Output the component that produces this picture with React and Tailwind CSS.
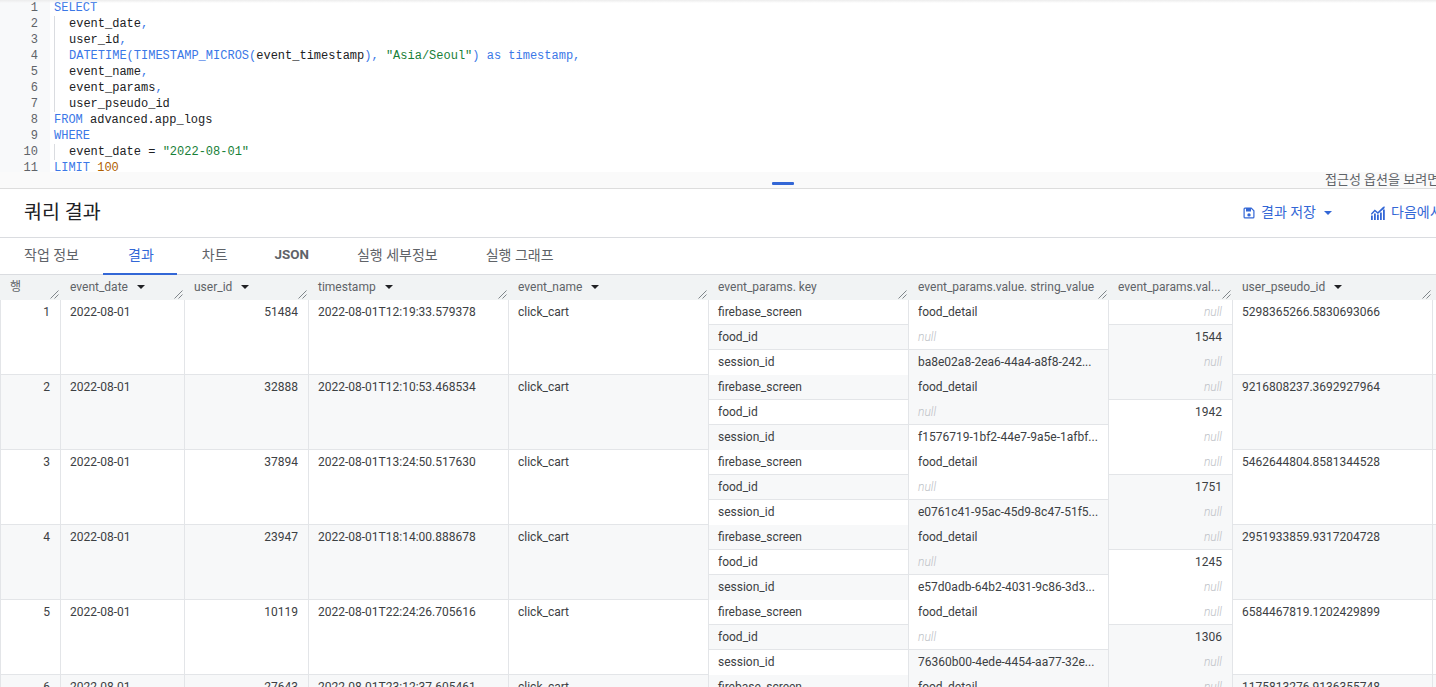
const Kw = ({ children }) => <span className="text-[#3b78e7]">{children}</span>;
const Str = ({ children }) => <span className="text-[#188038]">{children}</span>;
const Num = ({ children }) => <span className="text-[#b06000]">{children}</span>;

const sql = [
  [<Kw>SELECT</Kw>, false],
  [<>event_date<Kw>,</Kw></>, true],
  [<>user_id<Kw>,</Kw></>, true],
  [<><Kw>DATETIME(TIMESTAMP_MICROS(</Kw>event_timestamp<Kw>), </Kw><Str>"Asia/Seoul"</Str><Kw>) as timestamp,</Kw></>, true],
  [<>event_name<Kw>,</Kw></>, true],
  [<>event_params<Kw>,</Kw></>, true],
  [<>user_pseudo_id</>, true],
  [<><Kw>FROM</Kw> advanced.app_logs</>, false],
  [<Kw>WHERE</Kw>, false],
  [<>event_date = <Str>"2022-08-01"</Str></>, true],
  [<><Kw>LIMIT</Kw> <Num>100</Num></>, false],
];

const rows = [
  ["1", "51484", "2022-08-01T12:19:33.579378", "ba8e02a8-2ea6-44a4-a8f8-242...", "1544", "5298365266.5830693066"],
  ["2", "32888", "2022-08-01T12:10:53.468534", "f1576719-1bf2-44e7-9a5e-1afbf...", "1942", "9216808237.3692927964"],
  ["3", "37894", "2022-08-01T13:24:50.517630", "e0761c41-95ac-45d9-8c47-51f5...", "1751", "5462644804.8581344528"],
  ["4", "23947", "2022-08-01T18:14:00.888678", "e57d0adb-64b2-4031-9c86-3d3...", "1245", "2951933859.9317204728"],
  ["5", "10119", "2022-08-01T22:24:26.705616", "76360b00-4ede-4454-aa77-32e...", "1306", "6584467819.1202429899"],
  ["6", "27643", "2022-08-01T23:12:37.605461", "", "", "1175813276.9136355748"],
];

const colGrid = "grid grid-cols-[60px_124px_124px_200px_200px_200px_200px_124px_200px_4px]";

function Grip() {
  return (
    <svg className="absolute right-[1px] bottom-[1px]" width="9" height="9" viewBox="0 0 9 9" fill="none" stroke="#80868b" strokeWidth="1">
      <path d="M0.5 8.5 L8.5 0.5" />
      <path d="M4.5 8.5 L8.5 4.5" />
    </svg>
  );
}

function Caret() {
  return (
    <svg className="ml-[9px] shrink-0" width="8" height="4" viewBox="0 0 8 4">
      <path d="M0 0 H8 L4 4 Z" fill="#202124" />
    </svg>
  );
}

function Head({ label, caret }) {
  return (
    <div className="relative flex h-[25px] items-center pl-[10px] pb-[1px] text-[#5f6368] overflow-hidden whitespace-nowrap">
      <span>{label}</span>
      {caret && <Caret />}
      <Grip />
    </div>
  );
}

function Cell({ children, right }) {
  return (
    <div className={`h-full border-l border-[#e3e5e8] pl-[9px] pr-[10px] pt-[4px] leading-[16px] ${right ? "text-right" : ""}`}>
      {children}
    </div>
  );
}

const Null = () => <span className="italic font-light text-[#bdc1c6]">null</span>;

function Sub({ children, bg, divider, right }) {
  return (
    <div
      className={`h-[25px] pl-[9px] pr-[10px] leading-[24px] whitespace-nowrap overflow-hidden ${bg} ${divider ? "border-b border-[#e3e5e8]" : ""} ${right ? "text-right" : ""}`}
    >
      {children}
    </div>
  );
}

const tabs = [
  ["작업 정보", "px-[24px]"],
  ["결과", "pl-[25px] pr-[23px] text-[#3367d6] border-b-2 border-[#3367d6] -mb-[1px] pt-[1px]"],
  ["차트", "pl-[25px] pr-[23px]"],
  ["JSON", "px-[24px] font-bold text-[13.4px]"],
  ["실행 세부정보", "px-[24px]"],
  ["실행 그래프", "px-[24px]"],
];

export default function App() {
  return (
    <div className="h-[687px] w-[1436px] overflow-hidden bg-white font-['Roboto','Noto_Sans_CJK_KR',sans-serif] text-[12px] text-[#3c4043] flex flex-col">
      {/* editor */}
      <div className="relative h-[176px] shrink-0 flex overflow-hidden">
        <div className="w-[50px] bg-[#f8f9fa] shrink-0">
          {sql.map((_, i) => (
            <div key={i} className="h-[16px] pr-[12px] text-right font-['Liberation_Mono',monospace] leading-[16px] text-[#5f6368]">
              {i + 1}
            </div>
          ))}
        </div>
        <div className="pl-[4px] font-['Liberation_Mono',monospace] text-[#202124]">
          {sql.map(([c, indent], i) => (
            <div key={i} className={`h-[16px] leading-[16px] whitespace-pre ${indent ? "pl-[14px] border-l border-[#dadce0]" : ""}`}>
              {c}
            </div>
          ))}
        </div>
        <div className="absolute inset-x-0 top-0 h-[3px] bg-gradient-to-b from-[#ececec] to-transparent" />
        {/* splitter band lies over the clipped last code line */}
        <div className="absolute inset-x-0 top-[172px] h-[4px] bg-[#fafafa]" />
      </div>

      {/* splitter */}
      <div className="relative h-[13px] shrink-0 bg-[#fafafa] border-b border-[#dddddd]">
        <div className="absolute left-[772px] top-[6px] h-[3px] w-[22px] rounded-[1px] bg-[#3367d6]" />
        <div className="absolute left-[1325px] -top-[4px] whitespace-nowrap text-[13px] leading-[15px] text-[#5f6368]">접근성 옵션을 보려면</div>
      </div>

      {/* title */}
      <div className="h-[49px] shrink-0 flex items-center border-b border-[#dadce0] pl-[24px]">
        <div className="text-[19.5px] text-[#202124] w-[1219px] shrink-0 pb-[1px]">쿼리 결과</div>
        <div className="flex items-center shrink-0 text-[#3367d6] pb-[1px]">
          <svg width="12" height="12" viewBox="0 0 12 12">
            <path fillRule="evenodd" fill="#3367d6" d="M2 0.5h6.5L11.5 3.5V10a1.5 1.5 0 0 1-1.5 1.5H2A1.5 1.5 0 0 1 .5 10V2A1.5 1.5 0 0 1 2 .5zM2 1.7a.3.3 0 0 0-.3.3v8a.3.3 0 0 0 .3.3h8a.3.3 0 0 0 .3-.3V4L8 1.7V4.5H3V1.7H2zM6 6.2a1.7 1.7 0 1 0 0 3.4 1.7 1.7 0 0 0 0-3.4z" />
          </svg>
          <span className="ml-[6px] text-[14px]">결과 저장</span>
          <svg className="ml-[8px]" width="8" height="4" viewBox="0 0 8 4"><path d="M0 0 H8 L4 4 Z" fill="#3367d6" /></svg>
        </div>
        <div className="flex items-center shrink-0 ml-[39px] text-[#3367d6] pb-[1px]">
          <svg width="14" height="14" viewBox="0 0 14 14" fill="#3367d6">
            <path d="M0 14V9.5h1.8V14zM3 14V7.5h1.8V14zM6 14V8.5h1.8V14zM9 14V6.5h1.8V14zM12 14V3.5h1.8V14z" />
            <path d="M0 7.5L3.8 3.5 6.8 6 12.2 0.8 13.8 0.5 13.5 2.2 6.9 8 3.9 5.5 0.6 9z" />
          </svg>
          <span className="ml-[6px] text-[14px] whitespace-nowrap">다음에서 탐색</span>
        </div>
      </div>

      {/* tabs */}
      <div className="h-[37px] shrink-0 flex items-stretch border-b border-[#dadce0] text-[14px] text-[#5f6368]">
        {tabs.map(([t, cls]) => (
          <div key={t} className={`flex items-center pb-[1px] ${cls}`}>
            {t}
          </div>
        ))}
      </div>

      {/* results */}
      <div className="flex-1 overflow-hidden">
        <div className={`${colGrid} bg-[#f1f3f4]`}>
          <Head label="행" />
          <Head label="event_date" caret />
          <Head label="user_id" caret />
          <Head label="timestamp" caret />
          <Head label="event_name" caret />
          <Head label="event_params. key" />
          <Head label="event_params.value. string_value" />
          <Head label="event_params.val..." />
          <Head label="user_pseudo_id" caret />
          <div />
        </div>
        {rows.map((r, i) => {
          const even = i % 2 === 1;
          const a = even ? "bg-[#f7f8f9]" : "bg-white";
          const b = even ? "bg-white" : "bg-[#f7f8f9]";
          return (
            <div key={r[0]} className={`${colGrid} h-[75px] border-b border-[#e3e5e8] ${a}`}>
              <Cell right>{r[0]}</Cell>
              <Cell>2022-08-01</Cell>
              <Cell right>{r[1]}</Cell>
              <Cell>{r[2]}</Cell>
              <Cell>click_cart</Cell>
              <div className="border-l border-[#e3e5e8]">
                <Sub bg={a} divider>firebase_screen</Sub>
                <Sub bg={b} divider>food_id</Sub>
                <Sub bg={a}>session_id</Sub>
              </div>
              <div className="border-l border-[#e3e5e8]">
                <Sub bg={a}>food_detail</Sub>
                <Sub bg={a} divider><Null /></Sub>
                <Sub bg={b}>{r[3]}</Sub>
              </div>
              <div className="border-l border-[#e3e5e8]">
                <Sub bg={a} divider right><Null /></Sub>
                <Sub bg={b} right>{r[4]}</Sub>
                <Sub bg={b} right><Null /></Sub>
              </div>
              <Cell>{r[5]}</Cell>
              <div className="border-l border-[#e3e5e8]" />
            </div>
          );
        })}
      </div>
    </div>
  );
}
